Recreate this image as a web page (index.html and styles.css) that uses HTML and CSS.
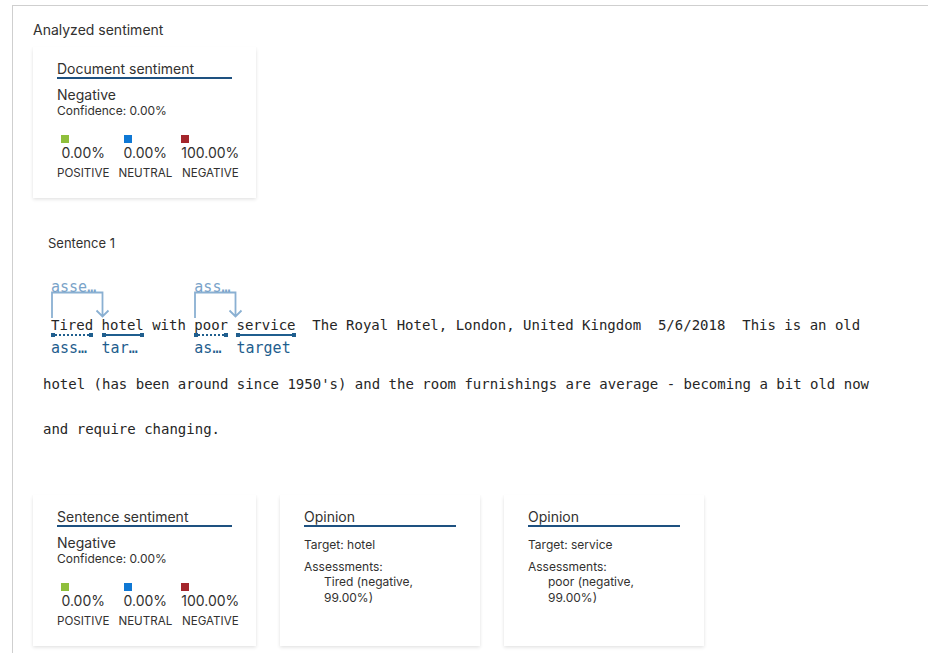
FILE: index.html
```html
<!DOCTYPE html>
<html lang="en">
<head>
<meta charset="utf-8">
<title>Analyzed sentiment</title>
<link rel="stylesheet" href="styles.css">
</head>
<body>
<div class="panel">
  <div class="title">Analyzed sentiment</div>
  <div class="card">
    <div class="card-head">Document sentiment</div>
    <div class="label">Negative</div>
    <div class="conf">Confidence: 0.00%</div>
    <div class="scores">
      <div class="score"><div class="score-in"><span class="sq pos"></span><div class="pct">0.00%</div></div><div class="cat">POSITIVE</div></div>
      <div class="score"><div class="score-in"><span class="sq neu"></span><div class="pct">0.00%</div></div><div class="cat">NEUTRAL</div></div>
      <div class="score"><div class="score-in"><span class="sq neg"></span><div class="pct">100.00%</div></div><div class="cat">NEGATIVE</div></div>
    </div>
  </div>

  <div class="sentence">
    <div class="sent-title">Sentence 1</div>
    <p class="text"><span class="tok"><span class="rel rel-1"><span class="rel-label">assessment</span><svg class="bracket" width="53" height="27" viewBox="0 0 53 27"><path d="M1 27V1.5H51.5V25.5M45.5 19.5L51.5 25.5L57.5 19.5"/></svg></span>Tired<span class="bar dotted"></span><span class="below">assessment</span></span> <span class="tok">hotel<span class="bar"></span><span class="below">target</span></span> with <span class="tok"><span class="rel rel-2"><span class="rel-label">assessment</span><svg class="bracket" width="43" height="27" viewBox="0 0 43 27"><path d="M1 27V1.5H41.5V25.5M35.5 19.5L41.5 25.5L47.5 19.5"/></svg></span>poor<span class="bar dotted"></span><span class="below">assessment</span></span> <span class="tok">service<span class="bar"></span><span class="below">target</span></span>  The Royal Hotel, London, United Kingdom  5/6/2018  This is an old hotel (has been around since 1950's) and the room furnishings are average - becoming a bit old now and require changing.</p>
  </div>

  <div class="cards">
    <div class="card">
      <div class="card-head">Sentence sentiment</div>
      <div class="label">Negative</div>
      <div class="conf">Confidence: 0.00%</div>
      <div class="scores">
        <div class="score"><div class="score-in"><span class="sq pos"></span><div class="pct">0.00%</div></div><div class="cat">POSITIVE</div></div>
        <div class="score"><div class="score-in"><span class="sq neu"></span><div class="pct">0.00%</div></div><div class="cat">NEUTRAL</div></div>
        <div class="score"><div class="score-in"><span class="sq neg"></span><div class="pct">100.00%</div></div><div class="cat">NEGATIVE</div></div>
      </div>
    </div>
    <div class="card opinion">
      <div class="card-head">Opinion</div>
      <div class="op-target">Target: hotel</div>
      <div class="op-label">Assessments:</div>
      <div class="op-item">Tired (negative, 99.00%)</div>
    </div>
    <div class="card opinion">
      <div class="card-head">Opinion</div>
      <div class="op-target">Target: service</div>
      <div class="op-label">Assessments:</div>
      <div class="op-item">poor (negative, 99.00%)</div>
    </div>
  </div>
</div>
</body>
</html>
```

FILE: styles.css
```css
html, body {
  margin: 0;
  padding: 0;
  background: #fff;
}

body {
  font-family: Inter, "Segoe UI", "Noto Sans", sans-serif;
  color: #323130;
  overflow: hidden;
}

.panel {
  margin: 5px 0 0 12px;
  border-top: 1px solid #cfcfcf;
  border-left: 1px solid #cfcfcf;
  padding: 14px 0 0 20px;
  min-height: 700px;
}

.title {
  font-size: 14px;
  line-height: 20px;
}

.card {
  box-sizing: border-box;
  width: 223px;
  margin-top: 7px;
  padding: 13px 24px 17px;
  background: #fff;
  box-shadow: 0 1.6px 3.6px rgba(0, 0, 0, 0.12), 0 0.3px 0.9px rgba(0, 0, 0, 0.1);
}

.card-head {
  font-size: 14px;
  line-height: 17px;
  border-bottom: 2px solid #1e5180;
}

.label {
  margin-top: 7px;
  font-size: 14px;
  line-height: 18px;
}

.conf {
  font-size: 12px;
  line-height: 14px;
}

.scores {
  display: flex;
  gap: 9px;
  margin-top: 17px;
}

.score {
  display: flex;
  flex-direction: column;
  align-items: center;
}

.sq {
  display: block;
  width: 8px;
  height: 8px;
}

.sq.pos { background: #8fbf3c; }
.sq.neu { background: #0f78d4; }
.sq.neg { background: #a4262c; }

.pct {
  font-size: 14px;
  line-height: 20px;
}

.cat {
  margin-top: 2px;
  font-size: 11.6px;
  line-height: 16px;
}

.sentence {
  margin-top: 36px;
}

.sent-title {
  margin-left: 15px;
  font-size: 13px;
  line-height: 18px;
}

.text {
  margin: 51px 0 0 10px;
  width: 840px;
  font-family: "DejaVu Sans Mono", "Liberation Mono", monospace;
  font-size: 14px;
  line-height: 45px;
  white-space: pre-wrap;
  text-indent: 8px;
  color: #262626;
}

.tok {
  position: relative;
  display: inline-block;
  line-height: 20px;
  padding-bottom: 27px;
  text-indent: 0;
}

.bar {
  position: absolute;
  left: 0;
  right: 0;
  top: 19px;
  height: 2px;
  background: #1f5e8e;
}

.bar::before,
.bar::after {
  content: "";
  position: absolute;
  top: -1px;
  width: 4px;
  height: 4px;
  background: #1f5e8e;
}

.bar::before { left: 0; }
.bar::after { right: 0; }

.bar.dotted {
  background: repeating-linear-gradient(to right, #1f5e8e 0 2px, transparent 2px 4px);
}

.below {
  position: absolute;
  left: 0;
  right: 0;
  top: 24px;
  font-size: 15px;
  line-height: 18px;
  color: #1f5e8e;
  white-space: nowrap;
  overflow: hidden;
  text-overflow: ellipsis;
}

.rel {
  position: absolute;
  left: 0;
  top: -24px;
  height: 27px;
}

.rel-1 { width: 52px; }
.rel-2 { width: 42px; }

.rel-label {
  position: absolute;
  left: 0;
  right: 0;
  bottom: calc(100% - 4px);
  font-size: 15px;
  line-height: 16px;
  color: #7aa3c9;
  white-space: nowrap;
  overflow: hidden;
  text-overflow: ellipsis;
}

.bracket {
  display: block;
  overflow: visible;
  fill: none;
  stroke: #8ab0d2;
  stroke-width: 1.8;
}

.cards {
  display: flex;
  align-items: stretch;
  gap: 24px;
  margin-top: 43px;
}

.cards .card {
  margin-top: 0;
}

.card.opinion {
  width: 200px;
}

.op-target {
  margin-top: 10px;
  font-size: 12px;
  line-height: 16px;
}

.op-label {
  margin-top: 6px;
  font-size: 12px;
  line-height: 15px;
}

.op-item {
  padding-left: 20px;
  font-size: 12px;
  line-height: 16px;
}
```
